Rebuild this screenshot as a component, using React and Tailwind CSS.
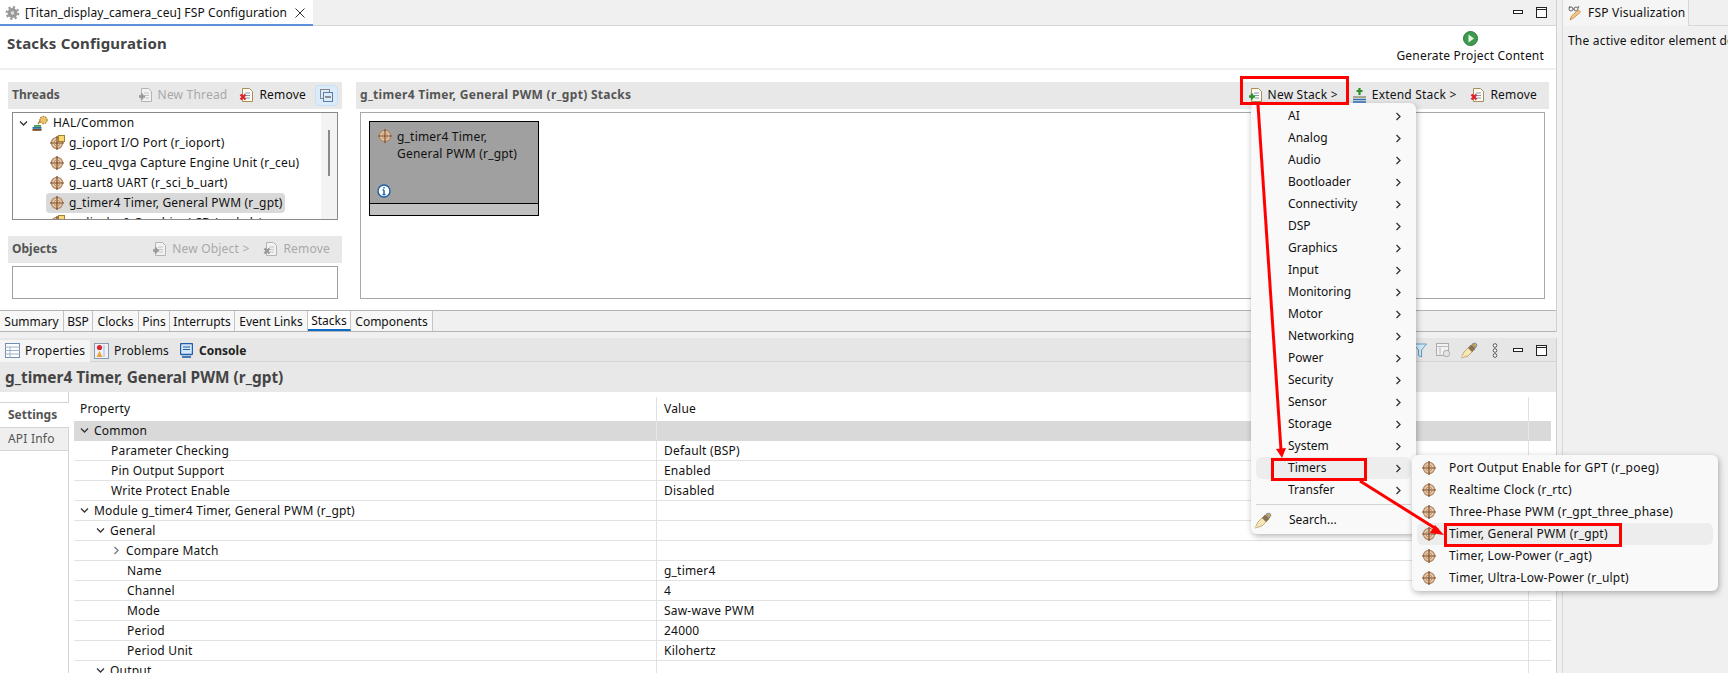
import React from 'react';

// small drawn icons
const Ball = ({ badge }) => (
  <svg width="16" height="16" viewBox="0 0 16 16" className="shrink-0">
    <circle cx="8" cy="8" r="5.6" fill="#e8c8a8" stroke="#b08a68" strokeWidth="1.2" />
    <path d="M8 1v14M1 8h14" stroke="#7a4a28" strokeWidth="1.2" />
    <circle cx="8" cy="8" r="3" fill="none" stroke="#b08a68" strokeWidth="0.8" />
    {badge && <rect x="9.5" y="0.5" width="6" height="6" fill="#f7d774" stroke="#a8802a" />}
  </svg>
);

const Doc = ({ mark, off }) => (
  <svg width="15" height="16" viewBox="0 0 15 16" className="shrink-0">
    <path d="M3.5 1.5h7l3 3v10h-10z" fill={off ? '#f2f2f2' : '#fdfaf0'} stroke={off ? '#b4b4b4' : '#a98d5c'} />
    <path d="M6 6h5M7 8.5h4M7 11h4" stroke={off ? '#c4c4c4' : '#7f9ac0'} />
    {mark === 'x' && <path d="M1.5 7.5l5 5M6.5 7.5l-5 5" stroke={off ? '#999' : '#e0222c'} strokeWidth="2.4" />}
    {mark === 'plus' && <path d="M4 6.5v6M1 9.5h6" stroke={off ? '#999' : '#2f8f2f'} strokeWidth="2.4" />}
  </svg>
);

const ExtendIcon = () => (
  <svg width="15" height="16" viewBox="0 0 15 16" className="shrink-0">
    <path d="M7.5 1v7M4.5 4h6" stroke="#2f8f2f" strokeWidth="2.2" />
    <path d="M1 10h13" stroke="#8a8a6a" strokeWidth="1.4" />
    <path d="M1 12.5h13M1 15h13" stroke="#2f6fb5" strokeWidth="1.4" />
  </svg>
);

const Pen = () => (
  <svg width="18" height="17" viewBox="0 0 18 17" className="shrink-0">
    <path d="M1 16l3-6 7-7 4 4-7 7z" fill="#f6e7b8" stroke="#b59a5c" strokeWidth="0.8" />
    <path d="M8 6l4 4 3.5-3.5-4-4z" fill="#8a7150" />
    <path d="M12 2l3.5-1 1.5 2-1.5 3z" fill="#e0a33a" stroke="#2f6fb5" strokeWidth="0.6" />
    <path d="M1 16l2-1.2-1-1z" fill="#fff8dd" />
  </svg>
);

const Chevron = ({ dir, color = '#333' }) => (
  <svg width="9" height="9" viewBox="0 0 9 9" className="shrink-0">
    <path d={dir === 'down' ? 'M1 2.5l3.5 3.5 3.5-3.5' : 'M2.5 1l3.5 3.5-3.5 3.5'} fill="none" stroke={color} strokeWidth="1.3" />
  </svg>
);

const WinButtons = () => (
  <div className="flex items-center gap-[13px]">
    <svg width="10" height="5" viewBox="0 0 10 5"><rect x="0.5" y="0.5" width="9" height="3" fill="#fff" stroke="#222" /></svg>
    <svg width="11" height="11" viewBox="0 0 11 11"><rect x="0.5" y="0.5" width="10" height="10" fill="#fff" stroke="#222" /><path d="M0 2.5h11" stroke="#222" /></svg>
  </div>
);

const Gear = () => (
  <svg width="15" height="16" viewBox="0 0 15 16" className="shrink-0">
    <circle cx="7.5" cy="8" r="5" fill="#9a9a9a" />
    <circle cx="7.5" cy="8" r="5.8" fill="none" stroke="#9a9a9a" strokeWidth="2.2" strokeDasharray="2.2 2.3" />
    <circle cx="7.5" cy="8" r="2.4" fill="#d8d8d8" stroke="#777" strokeWidth="0.6" />
  </svg>
);

const threads = [
  { name: 'g_ioport I/O Port (r_ioport)', badge: true },
  { name: 'g_ceu_qvga Capture Engine Unit (r_ceu)' },
  { name: 'g_uart8 UART (r_sci_b_uart)' },
  { name: 'g_timer4 Timer, General PWM (r_gpt)', selected: true },
  { name: 'g_display0 Graphics LCD (r_glcdc)', badge: true },
];

const pageTabs = [
  ['Summary', 'w-[64px]'],
  ['BSP', 'w-[29px]'],
  ['Clocks', 'w-[46px]'],
  ['Pins', 'w-[31px]'],
  ['Interrupts', 'w-[65px]'],
  ['Event Links', 'w-[73px]'],
  ['Stacks', 'w-[43px]'],
  ['Components', 'w-[82px]'],
];

const rows = [
  { label: 'Common', pad: 'pl-[6px]', arrow: 'down', head: true },
  { label: 'Parameter Checking', pad: 'pl-[37px]', value: 'Default (BSP)' },
  { label: 'Pin Output Support', pad: 'pl-[37px]', value: 'Enabled' },
  { label: 'Write Protect Enable', pad: 'pl-[37px]', value: 'Disabled' },
  { label: 'Module g_timer4 Timer, General PWM (r_gpt)', pad: 'pl-[6px]', arrow: 'down' },
  { label: 'General', pad: 'pl-[22px]', arrow: 'down' },
  { label: 'Compare Match', pad: 'pl-[38px]', arrow: 'right' },
  { label: 'Name', pad: 'pl-[53px]', value: 'g_timer4' },
  { label: 'Channel', pad: 'pl-[53px]', value: '4' },
  { label: 'Mode', pad: 'pl-[53px]', value: 'Saw-wave PWM' },
  { label: 'Period', pad: 'pl-[53px]', value: '24000' },
  { label: 'Period Unit', pad: 'pl-[53px]', value: 'Kilohertz' },
  { label: 'Output', pad: 'pl-[22px]', arrow: 'down' },
];

const menuItems = ['AI', 'Analog', 'Audio', 'Bootloader', 'Connectivity', 'DSP', 'Graphics', 'Input', 'Monitoring', 'Motor', 'Networking', 'Power', 'Security', 'Sensor', 'Storage', 'System', 'Timers', 'Transfer'];

const timerItems = ['Port Output Enable for GPT (r_poeg)', 'Realtime Clock (r_rtc)', 'Three-Phase PWM (r_gpt_three_phase)', 'Timer, General PWM (r_gpt)', 'Timer, Low-Power (r_agt)', 'Timer, Ultra-Low-Power (r_ulpt)'];

function ThreadsPane() {
  return (
    <div className="w-[356px] shrink-0 pl-[8px] pr-[14px] pt-[12px]">
      <div className="h-[27px] bg-[#e8e8e8] flex items-center pl-[4px] pr-[4px] pb-[1px] whitespace-nowrap">
        <span className="font-bold text-[#555] tracking-normal">Threads</span>
        <div className="ml-auto flex items-center gap-[5px] text-[#a8a8a8]"><Doc mark="plus" off />New Thread</div>
        <div className="ml-[12px] flex items-center gap-[5px]"><Doc mark="x" />Remove</div>
        <div className="ml-[9px] w-[23px] h-[21px] flex items-center justify-center bg-[#dcebfa] border border-[#c6e0f7] rounded-sm">
          <svg width="13" height="13" viewBox="0 0 13 13"><rect x="0.5" y="0.5" width="9" height="9" fill="none" stroke="#888" /><rect x="3.5" y="3.5" width="9" height="9" fill="#dcebfa" stroke="#5a7fa8" /><path d="M5 8h6" stroke="#333" /></svg>
        </div>
      </div>
      <div className="mt-[3px] mx-[4px] h-[108px] border border-[#8a8a8a] bg-white flex overflow-hidden">
        <div className="flex-1 min-w-0 overflow-hidden">
          <div className="h-[20px] flex items-center pl-[6px]">
            <Chevron dir="down" />
            <svg width="16" height="16" viewBox="0 0 16 16" className="ml-[4px] shrink-0">
              <rect x="0.5" y="12" width="9" height="1.8" fill="#2b6f9e" /><rect x="0.5" y="14" width="9" height="1.8" fill="#7a4a28" /><rect x="2" y="10" width="7" height="1.8" fill="#3f9a4f" />
              <path d="M6 9l4-6" stroke="#b58a3a" strokeWidth="1.5" />
              <circle cx="11.5" cy="5" r="3.6" fill="#e9c46a" stroke="#a9803a" strokeWidth="1.2" strokeDasharray="1.6 1" />
            </svg>
            <span className="ml-[5px]">HAL/Common</span>
          </div>
          {threads.map((t) => (
            <div key={t.name} className="h-[20px] flex items-center pl-[33px]">
              <div className={`flex items-center h-[20px] pl-[3px] pr-[2px] rounded-sm ${t.selected ? 'bg-[#d9d9d9]' : ''}`}>
                <Ball badge={t.badge} />
                <span className="ml-[4px] whitespace-nowrap">{t.name}</span>
              </div>
            </div>
          ))}
        </div>
        <div className="w-[16px] shrink-0 bg-[#f3f3f3] pt-[17px] pl-[7px]">
          <div className="w-[2px] h-[46px] bg-[#8a8a8a]" />
        </div>
      </div>
      <div className="mt-[16px] h-[27px] bg-[#e8e8e8] flex items-center pl-[4px] pr-[12px] pb-[1px] whitespace-nowrap">
        <span className="font-bold text-[#555] tracking-normal">Objects</span>
        <div className="ml-auto flex items-center gap-[5px] text-[#a8a8a8]"><Doc mark="plus" off />New Object &gt;</div>
        <div className="ml-[14px] flex items-center gap-[5px] text-[#a8a8a8]"><Doc mark="x" off />Remove</div>
      </div>
      <div className="mt-[3px] mx-[4px] h-[33px] border border-[#a0a0a0] bg-white" />
    </div>
  );
}

function StacksPane() {
  return (
    <div className="flex-1 pr-[7px] pt-[12px] min-w-0">
      <div className="h-[27px] bg-[#e8e8e8] flex items-center pl-[4px] pr-[12px] pb-[1px] whitespace-nowrap">
        <span className="font-bold text-[#555] tracking-[0.3px]">g_timer4 Timer, General PWM (r_gpt) Stacks</span>
        <div className="ml-auto flex items-center gap-[5px]"><Doc mark="plus" />New Stack &gt;</div>
        <div className="ml-[14px] flex items-center gap-[5px]"><ExtendIcon />Extend Stack &gt;</div>
        <div className="ml-[14px] flex items-center gap-[5px]"><Doc mark="x" />Remove</div>
      </div>
      <div className="mt-[3px] mx-[4px] h-[187px] border border-[#a8a8a8] bg-white pl-[8px] pt-[8px]">
        <div className="w-[170px] h-[95px] border border-black bg-[#a0a0a0] flex flex-col">
          <div className="h-[82px] border-b border-black pl-[7px] pt-[6px] flex flex-col">
            <div className="flex leading-[17px]">
              <Ball />
              <span className="ml-[4px]">g_timer4 Timer,<br />General PWM (r_gpt)</span>
            </div>
            <svg width="14" height="14" viewBox="0 0 14 14" className="mt-auto mb-[5px]">
              <circle cx="7" cy="7" r="6" fill="#fff" stroke="#1a5fa8" strokeWidth="1.4" />
              <path d="M7 3v1.5M7 6v4.5M5.6 6h1.4M5.4 10.6h3.2" stroke="#1a5fa8" strokeWidth="1.4" />
            </svg>
          </div>
          <div className="flex-1 bg-[#c0c0c0]" />
        </div>
      </div>
    </div>
  );
}

function Editor() {
  return (
    <div className="h-[332px] flex flex-col border-r border-[#d0d0d0]">
      <div className="h-[26px] flex bg-[#f0f0f0] border-b border-[#d8d8d8] pr-[9px]">
        <div className="w-[313px] h-[26px] bg-white border-b-2 border-[#5f8fd9] flex items-center pl-[5px] pt-[2px] tracking-[0.1px]">
          <Gear />
          <span className="ml-[5px] whitespace-nowrap">[Titan_display_camera_ceu] FSP Configuration</span>
          <svg width="10" height="10" viewBox="0 0 10 10" className="ml-auto mr-[8px]"><path d="M0.5 0.5l9 9M9.5 0.5l-9 9" stroke="#333" /></svg>
        </div>
        <div className="ml-auto self-center"><WinButtons /></div>
      </div>
      <div className="h-[42px] bg-white flex justify-between pl-[7px] pr-[12px]">
        <span className="font-bold text-[15px] text-[#444] mt-[10px]">Stacks Configuration</span>
        <div className="flex flex-col items-center pt-[5px]">
          <svg width="15" height="15" viewBox="0 0 15 15"><circle cx="7.5" cy="7.5" r="7" fill="#3f9a4f" stroke="#2a7a3a" /><path d="M5.5 3.5l5.5 4-5.5 4z" fill="#e8f5e0" /></svg>
          <span className="mt-[4px] whitespace-nowrap">Generate Project Content</span>
        </div>
      </div>
      <div className="h-[2px] bg-[#f0f0f0]" />
      <div className="h-[240px] bg-white flex">
        <ThreadsPane />
        <StacksPane />
      </div>
      <div className="h-[22px] bg-[#f0f0f0] border-y border-[#b4b4b4] flex">
        {pageTabs.map(([name, w]) => (
          <div key={name} className={`${w} bg-[#f7f7f7] border-r border-[#c4c4c4] pt-[1px] flex items-center justify-center whitespace-nowrap tracking-normal ${name === 'Stacks' ? 'bg-white border-b-2 border-b-[#0a6bc8]' : ''}`}>{name}</div>
        ))}
      </div>
    </div>
  );
}

function Properties() {
  return (
    <div className="mt-[6px] flex-1 flex flex-col border-r border-[#d0d0d0] min-h-0">
      <div className="h-[24px] bg-[#e6e6e6] flex items-center border-b border-[#d4d4d4] pr-[9px] pt-[2px]">
        <div className="w-[90px] h-[22px] bg-[#f5f5f5] flex items-center pl-[5px] gap-[5px]">
          <svg width="15" height="15" viewBox="0 0 15 15" className="shrink-0"><rect x="0.5" y="0.5" width="14" height="14" fill="#fff" stroke="#6f8fb0" /><path d="M0 4h15M0 7.5h15M0 11h15M5 4v11" stroke="#9ab0c8" /></svg>
          Properties
        </div>
        <div className="ml-[4px] flex items-center gap-[5px]">
          <svg width="15" height="16" viewBox="0 0 15 16" className="shrink-0"><rect x="0.5" y="0.5" width="14" height="15" fill="#eef2f8" stroke="#8a9ab0" /><circle cx="5.5" cy="4.5" r="2.6" fill="#d8262c" /><path d="M5.5 8l3 6h-6z" fill="#e8a33a" /><path d="M10 2v12" stroke="#a8b8cc" /></svg>
          Problems
        </div>
        <div className="ml-[11px] flex items-center gap-[6px] font-bold text-[#222] tracking-normal">
          <svg width="13" height="15" viewBox="0 0 13 15" className="shrink-0"><rect x="0.5" y="0.5" width="12" height="11" rx="1" fill="#d6e6f5" stroke="#1f5fa8" strokeWidth="1.4" /><path d="M3 4h7M3 6.5h7" stroke="#1f5fa8" /><path d="M2 14h9" stroke="#1f5fa8" strokeWidth="1.6" /></svg>
          Console
        </div>
        <div className="ml-auto flex items-center gap-[9px]">
          <svg width="14" height="15" viewBox="0 0 14 15"><path d="M0.5 1h13l-5 6v7l-3-1.5V7z" fill="#d5eaf8" stroke="#5f9fc8" /></svg>
          <svg width="15" height="15" viewBox="0 0 15 15"><rect x="0.5" y="0.5" width="12" height="12" fill="#f2f2f2" stroke="#aaa" /><path d="M0 3.5h13M4 3.5v9" stroke="#bbb" /><circle cx="10.5" cy="10.5" r="3.2" fill="#e4e4e4" stroke="#aaa" /></svg>
          <Pen />
          <svg width="6" height="15" viewBox="0 0 6 15" className="ml-[5px] mr-[6px]"><circle cx="3" cy="2.5" r="1.8" fill="#fff" stroke="#555" /><circle cx="3" cy="7.5" r="1.8" fill="#fff" stroke="#555" /><circle cx="3" cy="12.5" r="1.8" fill="#fff" stroke="#555" /></svg>
          <WinButtons />
        </div>
      </div>
      <div className="h-[30px] bg-[#e8e8e8] flex items-center pl-[5px] pt-[2px] font-bold text-[15.4px] tracking-normal text-[#444] whitespace-nowrap">g_timer4 Timer, General PWM (r_gpt)</div>
      <div className="flex-1 bg-white flex min-h-0 overflow-hidden">
        <div className="w-[69px] shrink-0 border-r border-[#d4d4d4] pt-[10px]">
          <div className="h-[25px] border-t border-[#d4d4d4] flex items-center pl-[8px] pb-[1px] font-bold text-[#555] bg-white -mr-px tracking-normal">Settings</div>
          <div className="h-[24px] border-y border-[#d4d4d4] bg-[#efefef] flex items-center pl-[8px] text-[#555]">API Info</div>
        </div>
        <div className="ml-[5px] w-[1477px] pt-[5px]">
          <div className="grid grid-cols-[583px_872px_22px] h-[24px]">
            <div className="pl-[6px] flex items-center border-r border-[#e0e0e0]">Property</div>
            <div className="pl-[7px] flex items-center border-r border-[#e0e0e0]">Value</div>
            <div />
          </div>
          {rows.map((r) => (
            <div key={r.label} className={`grid grid-cols-[583px_872px_22px] h-[20px] border-b ${r.head ? 'bg-[#d9d9d9] border-[#d9d9d9]' : 'border-[#e2e2e2]'}`}>
              <div className={`${r.pad} flex items-center border-r ${r.head ? 'border-[#e8e8e8]' : 'border-[#e2e2e2]'} whitespace-nowrap`}>
                {r.arrow && <Chevron dir={r.arrow} color={r.arrow === 'right' ? '#777' : '#333'} />}
                <span className={r.arrow ? 'ml-[5px]' : ''}>{r.label}</span>
              </div>
              <div className={`pl-[7px] flex items-center border-r ${r.head ? 'border-[#e8e8e8]' : 'border-[#e2e2e2]'}`}>{r.value}</div>
              <div />
            </div>
          ))}
        </div>
      </div>
    </div>
  );
}

function Menus() {
  return (
    <>
      <div className="absolute left-[1251px] top-[103px] w-[165px] h-[431px] bg-[#f9f9f9] rounded-md shadow-[1px_2px_6px_rgba(0,0,0,0.3)] pt-[2px] px-[5px] tracking-normal">
        {menuItems.map((m) => (
          <div key={m} className={`h-[22px] flex items-center pl-[32px] pr-[8px] justify-between rounded-md ${m === 'Timers' ? 'bg-[#ededed]' : ''}`}>
            {m}
            <Chevron dir="right" />
          </div>
        ))}
        <div className="mt-[3px] h-px bg-[#d4d4d4]" />
        <div className="mt-[4px] h-[22px] flex items-center -ml-[2px]">
          <Pen />
          <span className="ml-[17px]">Search...</span>
        </div>
      </div>
      <div className="absolute left-[1412px] top-[455px] w-[306px] h-[136px] bg-[#f9f9f9] rounded-md shadow-[1px_2px_6px_rgba(0,0,0,0.3)] pt-[2px] px-[5px]">
        {timerItems.map((t) => (
          <div key={t} className={`h-[22px] flex items-center pl-[4px] rounded-md whitespace-nowrap ${t === 'Timer, General PWM (r_gpt)' ? 'bg-[#ededed]' : ''}`}>
            <Ball />
            <span className="ml-[12px]">{t}</span>
          </div>
        ))}
      </div>
    </>
  );
}

function Annotations() {
  return (
    <>
      <div className="absolute left-[1240px] top-[76px] w-[109px] h-[29px] border-[3px] border-[#ff0000]" />
      <div className="absolute left-[1271px] top-[458px] w-[96px] h-[23px] border-[3px] border-[#ff0000]" />
      <div className="absolute left-[1444px] top-[523px] w-[178px] h-[24px] border-[3px] border-[#ff0000]" />
      <svg width="1728" height="673" className="absolute left-0 top-0 pointer-events-none">
        <path d="M1258 105L1281 450" stroke="#ff0000" strokeWidth="3" />
        <path d="M1276 449l10 -1 -4 10z" fill="#ff0000" />
        <path d="M1360 481L1438 530" stroke="#ff0000" strokeWidth="3" />
        <path d="M1435 525l-5 8 14 2z" fill="#ff0000" />
      </svg>
    </>
  );
}

export default function App() {
  return (
    <div className="relative w-[1728px] h-[673px] overflow-hidden bg-[#f0f0f0] flex text-[12px] leading-none tracking-[0.2px] text-[#111] font-['Noto_Sans',sans-serif]">
      <div className="w-[1557px] shrink-0 flex flex-col">
        <Editor />
        <Properties />
      </div>
      <div className="ml-[5px] flex-1 min-w-0 border-l border-[#d8d8d8]">
        <div className="h-[26px] border-b border-[#d8d8d8] flex">
          <div className="w-[126px] h-[26px] bg-[#f5f5f5] border-r border-[#d8d8d8] flex items-center pl-[5px] gap-[5px] whitespace-nowrap">
            <svg width="15" height="16" viewBox="0 0 15 16" className="shrink-0">
              <circle cx="3" cy="4" r="2" fill="none" stroke="#666" /><circle cx="8" cy="4" r="2" fill="none" stroke="#666" /><path d="M5 4h1M1 3l1-2M10 3l1-2" stroke="#666" />
              <path d="M2 15l1.5-4 7-6 2 2-7 6z" fill="#f2c98a" stroke="#c8964e" />
            </svg>
            FSP Visualization
          </div>
        </div>
        <div className="pl-[5px] pt-[9px] whitespace-nowrap overflow-hidden">The active editor element does not support this view</div>
      </div>
      <Menus />
      <Annotations />
    </div>
  );
}
